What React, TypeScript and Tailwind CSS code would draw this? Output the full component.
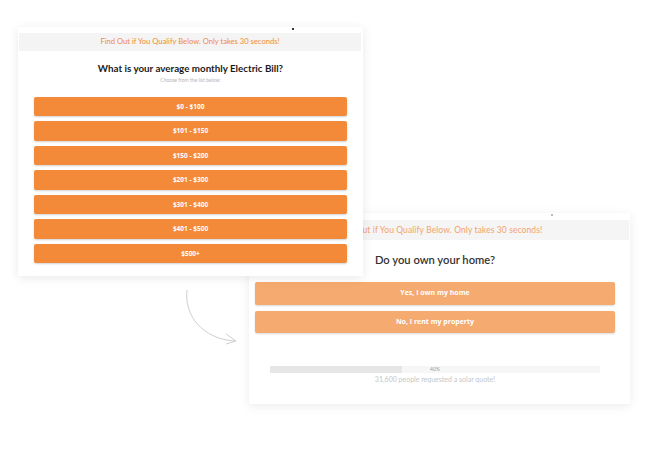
import React from "react";

const bills = ["$0 - $100", "$101 - $150", "$150 - $200", "$201 - $300", "$301 - $400", "$401 - $500", "$500+"];

export default function App() {
  return (
    <div className="relative w-[650px] h-[450px] bg-white overflow-hidden" style={{ fontFamily: "Lato, 'Open Sans', sans-serif" }}>
      {/* Card 2 (behind) */}
      <div className="absolute left-[249px] top-[213px] w-[381px] h-[191px] bg-white shadow-[0_2px_10px_rgba(0,0,0,0.08)] flex flex-col">
        <div className="relative h-[7px]">
          <div className="absolute left-[302px] top-[1px] w-[2px] h-[2px] bg-[#bbb]" />
        </div>
        <div className="mx-[1px] h-[20px] bg-[#f5f5f5] flex items-center justify-center text-[8.5px] text-[#f4a36a] tracking-[0.1px]">
          Find Out if You Qualify Below. Only takes 30 seconds!
        </div>
        <div className="flex flex-col pl-[6px] pr-[15px]">
          <div className="mt-[14px] text-center text-[11.2px] text-[#333] font-semibold leading-none">Do you own your home?</div>
          <div className="mt-[17px] flex flex-col gap-[6px]">
            <div className="h-[23px] rounded-[2px] bg-[#f5aa6f] shadow-[0_1px_2px_rgba(0,0,0,0.15)] flex items-center justify-center text-white text-[7px] font-bold" style={{ fontFamily: "'Open Sans', sans-serif" }}>Yes, I own my home</div>
            <div className="h-[22px] rounded-[2px] bg-[#f5aa6f] shadow-[0_1px_2px_rgba(0,0,0,0.15)] flex items-center justify-center text-white text-[7px] font-bold" style={{ fontFamily: "'Open Sans', sans-serif" }}>No, I rent my property</div>
          </div>
          <div className="mt-[33px] mx-[15px] relative h-[7px] bg-[#f6f6f6]">
            <div className="h-full w-[40%] bg-[#e6e6e6]" />
            <div className="absolute inset-0 flex items-center justify-center text-[5px] text-[#999] leading-none">40%</div>
          </div>
          <div className="mt-[3px] text-center text-[7px] text-[#c6c6c6] leading-none">31,600 people requested a solar quote!</div>
        </div>
      </div>

      {/* Arrow */}
      <svg className="absolute left-[180px] top-[285px]" width="64" height="64" viewBox="0 0 64 64" fill="none">
        <path d="M7 5 C 4 30, 22 54, 55 56" stroke="#cfcfcf" strokeWidth="1" />
        <path d="M46 49 L56 56 L46 59" stroke="#cfcfcf" strokeWidth="1" />
      </svg>

      {/* Card 1 (front) */}
      <div className="absolute left-[18px] top-[27px] w-[345px] h-[249px] bg-white shadow-[0_2px_10px_rgba(0,0,0,0.09)] flex flex-col z-10">
        <div className="relative h-[6px]">
          <div className="absolute left-[274px] top-[1px] w-[2px] h-[2px] bg-[#333]" />
        </div>
        <div className="ml-[1px] mr-[2px] h-[18px] bg-[#f4f4f4] flex items-center justify-center text-[7.6px] text-[#f08a3c]">
          Find Out if You Qualify Below. Only takes 30 seconds!
        </div>
        <div className="mt-[13px] text-center text-[9.8px] font-bold text-[#1a1a1a] leading-none">What is your average monthly Electric Bill?</div>
        <div className="mt-[4px] text-center text-[5px] text-[#b5b5b5] leading-none">Choose from the list below:</div>
        <div className="mt-[14px] px-[16px] flex flex-col gap-[5px]">
          {bills.map((b) => (
            <div key={b} className="h-[19.5px] rounded-[2px] bg-[#f38a3a] shadow-[0_1px_2px_rgba(0,0,0,0.18)] flex items-center justify-center text-white text-[6.5px] font-bold" style={{ fontFamily: "'Open Sans', sans-serif" }}>
              {b}
            </div>
          ))}
        </div>
      </div>
    </div>
  );
}
